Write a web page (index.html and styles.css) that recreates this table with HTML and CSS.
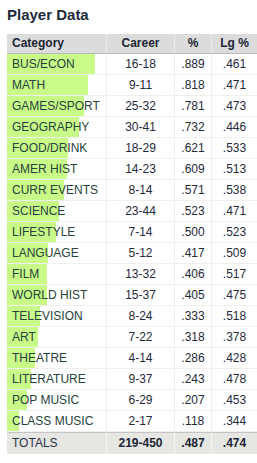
FILE: index.html
```html
<!DOCTYPE html>
<html>
<head>
<meta charset="utf-8">
<link rel="stylesheet" href="styles.css">
</head>
<body>
<div class="panel">
  <h2 class="title">Player Data</h2>
  <table class="stats">
    <colgroup><col class="c1"><col class="c2"><col class="c3"><col class="c4"></colgroup>
    <thead>
      <tr><th class="cat">Category</th><th>Career</th><th>%</th><th>Lg %</th></tr>
    </thead>
    <tbody>
      <tr><td class="cat" style="--p:88.9%">BUS/ECON</td><td>16-18</td><td>.889</td><td>.461</td></tr>
      <tr><td class="cat" style="--p:81.8%">MATH</td><td>9-11</td><td>.818</td><td>.471</td></tr>
      <tr><td class="cat" style="--p:78.1%">GAMES/SPORT</td><td>25-32</td><td>.781</td><td>.473</td></tr>
      <tr><td class="cat" style="--p:73.2%">GEOGRAPHY</td><td>30-41</td><td>.732</td><td>.446</td></tr>
      <tr><td class="cat" style="--p:62.1%">FOOD/DRINK</td><td>18-29</td><td>.621</td><td>.533</td></tr>
      <tr><td class="cat" style="--p:60.9%">AMER HIST</td><td>14-23</td><td>.609</td><td>.513</td></tr>
      <tr><td class="cat" style="--p:57.1%">CURR EVENTS</td><td>8-14</td><td>.571</td><td>.538</td></tr>
      <tr><td class="cat" style="--p:52.3%">SCIENCE</td><td>23-44</td><td>.523</td><td>.471</td></tr>
      <tr><td class="cat" style="--p:50.0%">LIFESTYLE</td><td>7-14</td><td>.500</td><td>.523</td></tr>
      <tr><td class="cat" style="--p:41.7%">LANGUAGE</td><td>5-12</td><td>.417</td><td>.509</td></tr>
      <tr><td class="cat" style="--p:40.6%">FILM</td><td>13-32</td><td>.406</td><td>.517</td></tr>
      <tr><td class="cat" style="--p:40.5%">WORLD HIST</td><td>15-37</td><td>.405</td><td>.475</td></tr>
      <tr><td class="cat" style="--p:33.3%">TELEVISION</td><td>8-24</td><td>.333</td><td>.518</td></tr>
      <tr><td class="cat" style="--p:31.8%">ART</td><td>7-22</td><td>.318</td><td>.378</td></tr>
      <tr><td class="cat" style="--p:28.6%">THEATRE</td><td>4-14</td><td>.286</td><td>.428</td></tr>
      <tr><td class="cat" style="--p:24.3%">LITERATURE</td><td>9-37</td><td>.243</td><td>.478</td></tr>
      <tr><td class="cat" style="--p:20.7%">POP MUSIC</td><td>6-29</td><td>.207</td><td>.453</td></tr>
      <tr><td class="cat" style="--p:11.8%">CLASS MUSIC</td><td>2-17</td><td>.118</td><td>.344</td></tr>
    </tbody>
    <tfoot>
      <tr><td class="cat">TOTALS</td><td class="b">219-450</td><td class="b">.487</td><td class="b">.474</td></tr>
    </tfoot>
  </table>
</div>
</body>
</html>
```
FILE: styles.css
```css
html, body {
  margin: 0;
  padding: 0;
  background: #fff;
}
body {
  font-family: "Liberation Sans", Arial, sans-serif;
}
.panel {
  padding: 6px 0 0 7px;
}
.title {
  margin: 0 0 10px 0;
  font-size: 15px;
  line-height: 18px;
  font-weight: bold;
  color: #1e2a3c;
}
.stats {
  border-collapse: separate;
  border-spacing: 0;
  table-layout: fixed;
  width: 250px;
  font-size: 12px;
}
.c1 { width: 100px; }
.c2 { width: 68px; }
.c3 { width: 37px; }
.c4 { width: 45px; }
.stats th {
  background: #dcdcdc;
  color: #1c2535;
  font-weight: bold;
  height: 19px;
  line-height: 19px;
  padding: 0;
  text-align: center;
  border-bottom: 1px solid #b9b9b9;
  border-right: 1px solid #ececec;
}
.stats th:last-child,
.stats td:last-child {
  border-right: none;
}
.stats td {
  height: 20px;
  line-height: 20px;
  padding: 0;
  text-align: center;
  color: #1f2a3a;
  border-bottom: 1px solid #efefef;
  border-right: 1px solid #efefef;
  white-space: nowrap;
}
.stats th.cat,
.stats td.cat {
  text-align: left;
  padding-left: 5px;
}
.stats tbody td.cat {
  color: #26423c;
  background: linear-gradient(to right, #c9fb88 var(--p), transparent var(--p));
}
.stats tfoot td {
  background: #e6e6e3;
  border-top: 1px solid #c4c4c4;
  border-bottom: none;
  border-right: 1px solid #f4f4f2;
  height: 21px;
  line-height: 21px;
}
.stats tfoot td.cat {
  color: #2a3546;
}
.stats tfoot td.b {
  font-weight: bold;
  color: #1c2535;
}
```
